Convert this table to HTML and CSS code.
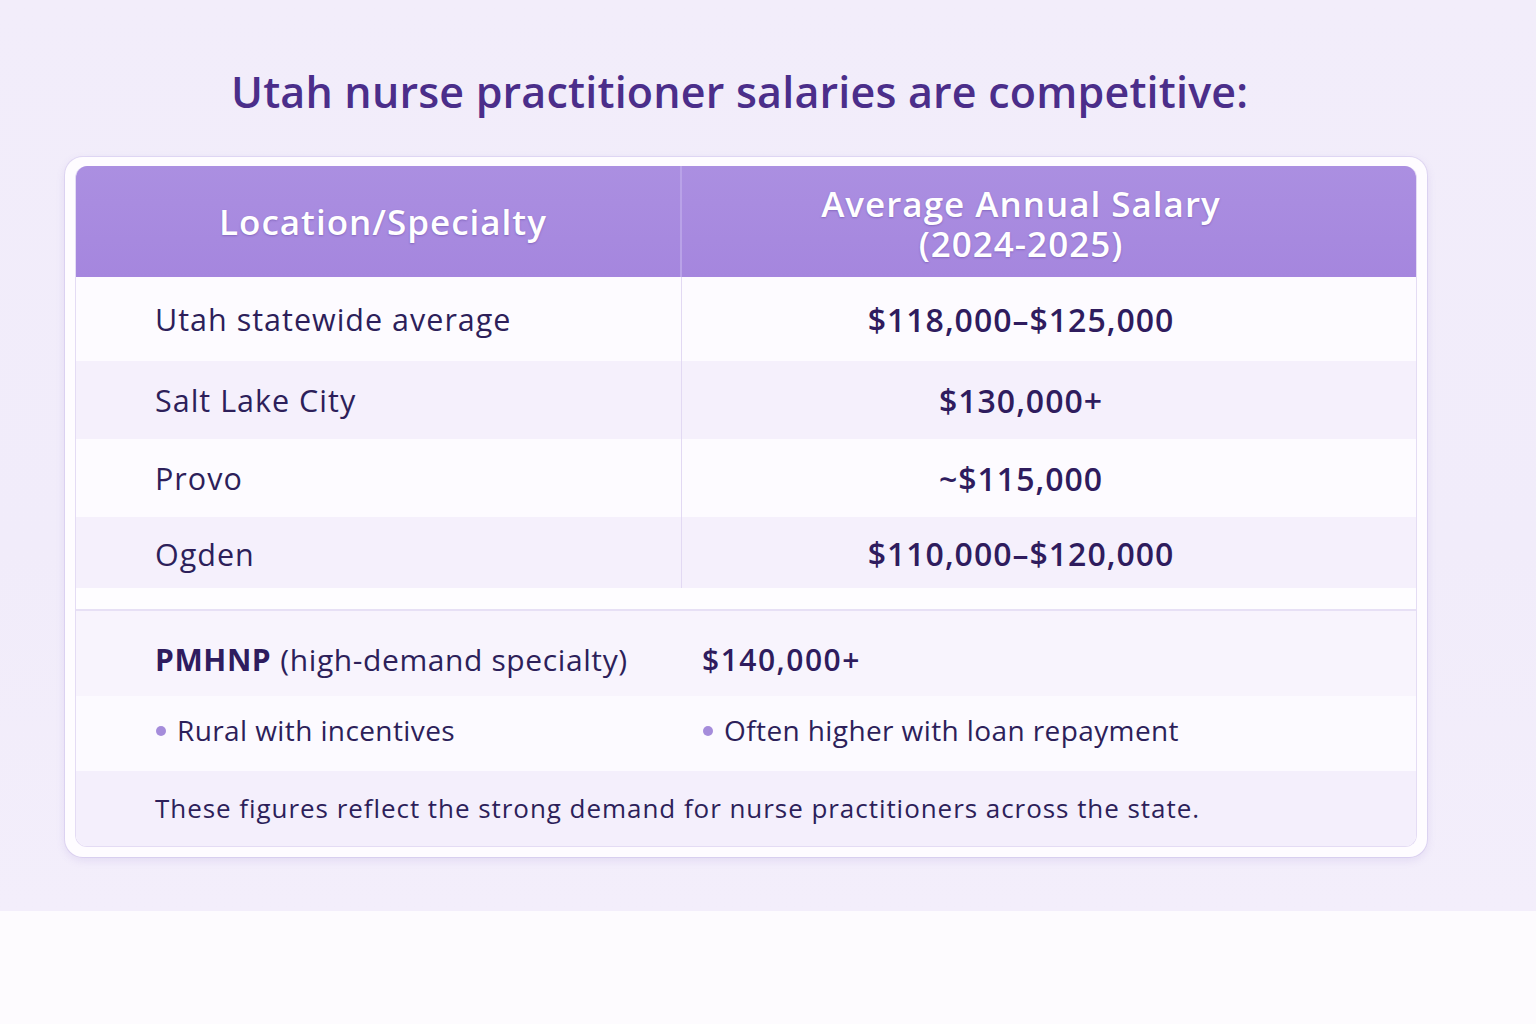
FILE: index.html
```html
<!DOCTYPE html>
<html lang="en">
<head>
<meta charset="utf-8">
<title>Utah NP Salaries</title>
<link rel="stylesheet" href="styles.css">
</head>
<body>
<div class="page">
  <h1 class="title">Utah nurse practitioner salaries are competitive:</h1>
  <div class="card">
    <div class="table">
      <div class="head">
        <div class="hcell left">Location/Specialty</div>
        <div class="hcell right"><span class="hl">Average Annual Salary</span><span class="hl">(2024-2025)</span></div>
      </div>
      <div class="row r1 odd">
        <div class="cell left">Utah statewide average</div>
        <div class="cell right val">$118,000–$125,000</div>
      </div>
      <div class="row r2 even">
        <div class="cell left">Salt Lake City</div>
        <div class="cell right val">$130,000+</div>
      </div>
      <div class="row r3 odd">
        <div class="cell left">Provo</div>
        <div class="cell right val">~$115,000</div>
      </div>
      <div class="row r4 even">
        <div class="cell left">Ogden</div>
        <div class="cell right val">$110,000–$120,000</div>
      </div>
      <div class="spacer"></div>
      <div class="special">
        <div class="srow pm">
          <div class="scell sleft"><strong>PMHNP</strong> (high-demand specialty)</div>
          <div class="scell sright val">$140,000+</div>
        </div>
        <div class="srow bl">
          <div class="scell sleft bullet"><span class="dot"></span>Rural with incentives</div>
          <div class="scell sright bullet"><span class="dot"></span>Often higher with loan repayment</div>
        </div>
        <div class="note">These figures reflect the strong demand for nurse practitioners across the state.</div>
      </div>
    </div>
  </div>
</div>
<div class="bottom"></div>
</body>
</html>
```

FILE: styles.css
```css
* { box-sizing: border-box; }
html, body { margin: 0; padding: 0; }
body {
  width: 1536px;
  height: 1024px;
  overflow: hidden;
  font-family: "Open Sans", "Noto Sans", sans-serif;
  color: #2d1f5a;
  background: #fdfbfe;
}
.page {
  height: 911px;
  background: linear-gradient(180deg, #f2edfa 0%, #f1ecfa 60%, #f3eefb 100%);
  padding: 66px 0 0 65px;
}
.title {
  margin: 0 0 0 166px;
  font-size: 43px;
  font-weight: 600;
  color: #4b2e8a;
  line-height: 52px;
  height: 91px;
  letter-spacing: 0.2px;
}
.card {
  width: 1362px;
  background: #fefcff;
  border-radius: 18px;
  padding: 9px 10px 10px 10px;
  box-shadow: 0 3px 10px rgba(120, 95, 190, 0.14), 0 0 0 1px rgba(200, 185, 235, 0.35);
}
.table {
  border-radius: 12px;
  overflow: hidden;
  border: 1px solid #e4dcf4;
  border-top: none;
  background: #fcfaff;
}
.head {
  display: grid;
  grid-template-columns: 606px 1fr;
  height: 111px;
  background: linear-gradient(180deg, #ab8fe1 0%, #a586de 100%);
  color: #ffffff;
}
.hcell {
  display: flex;
  align-items: center;
  justify-content: center;
  text-align: center;
  font-size: 35px;
  font-weight: 600;
  line-height: 40px;
  letter-spacing: 1px;
  text-shadow: 0 1px 2px rgba(70, 40, 130, 0.35);
}
.hcell.left { border-right: 2px solid #b9a2e8; padding-left: 10px; }
.hcell.right {
  flex-direction: column;
  padding-right: 56px;
  padding-top: 4px;
}
.hl { display: block; height: 40px; line-height: 40px; }
.row {
  display: grid;
  grid-template-columns: 606px 1fr;
}
.r1 { height: 84px; }
.r2 { height: 78px; }
.r3 { height: 78px; }
.r4 { height: 71px; }
.odd { background: #fdfbff; }
.even { background: #f5f0fc; }
.cell {
  display: flex;
  align-items: center;
  font-size: 30.5px;
  letter-spacing: 1px;
}
.cell.left {
  padding-left: 79px;
  border-right: 1px solid #e2d9f3;
}
.cell.right {
  justify-content: center;
  padding-right: 56px;
}
.r4 .cell { padding-top: 2px; }
.val { font-weight: 600; font-size: 32px; letter-spacing: 1px; color: #2f1c5e; }
.spacer {
  height: 23px;
  background: #fefdff;
  border-bottom: 2px solid #e7e0f5;
}
.special { background: #f8f4fd; }
.srow {
  display: grid;
  grid-template-columns: 626px 1fr;
}
.srow.pm { height: 85px; background: #f8f4fd; }
.srow.bl { height: 75px; background: #fcfaff; }
.scell {
  display: flex;
  align-items: center;
  font-size: 30px;
  letter-spacing: 0.6px;
}
.sleft { padding-left: 79px; }
.pm .scell { padding-top: 12px; }
.pm .val { letter-spacing: 1.5px; }
.pm strong { font-weight: 700; margin-right: 9px; color: #2f1c5e; }
.bl .scell { padding-bottom: 8px; font-size: 28px; letter-spacing: 0.4px; }
.bullet .dot {
  width: 10px;
  height: 10px;
  border-radius: 50%;
  background: #a58cdb;
  margin: 2px 11px 0 1px;
  flex: none;
}
.note {
  height: 75px;
  display: flex;
  align-items: center;
  padding-left: 79px;
  padding-bottom: 2px;
  font-size: 26px;
  letter-spacing: 0.95px;
  background: #f4effc;
}
.bottom { height: 113px; }
```
